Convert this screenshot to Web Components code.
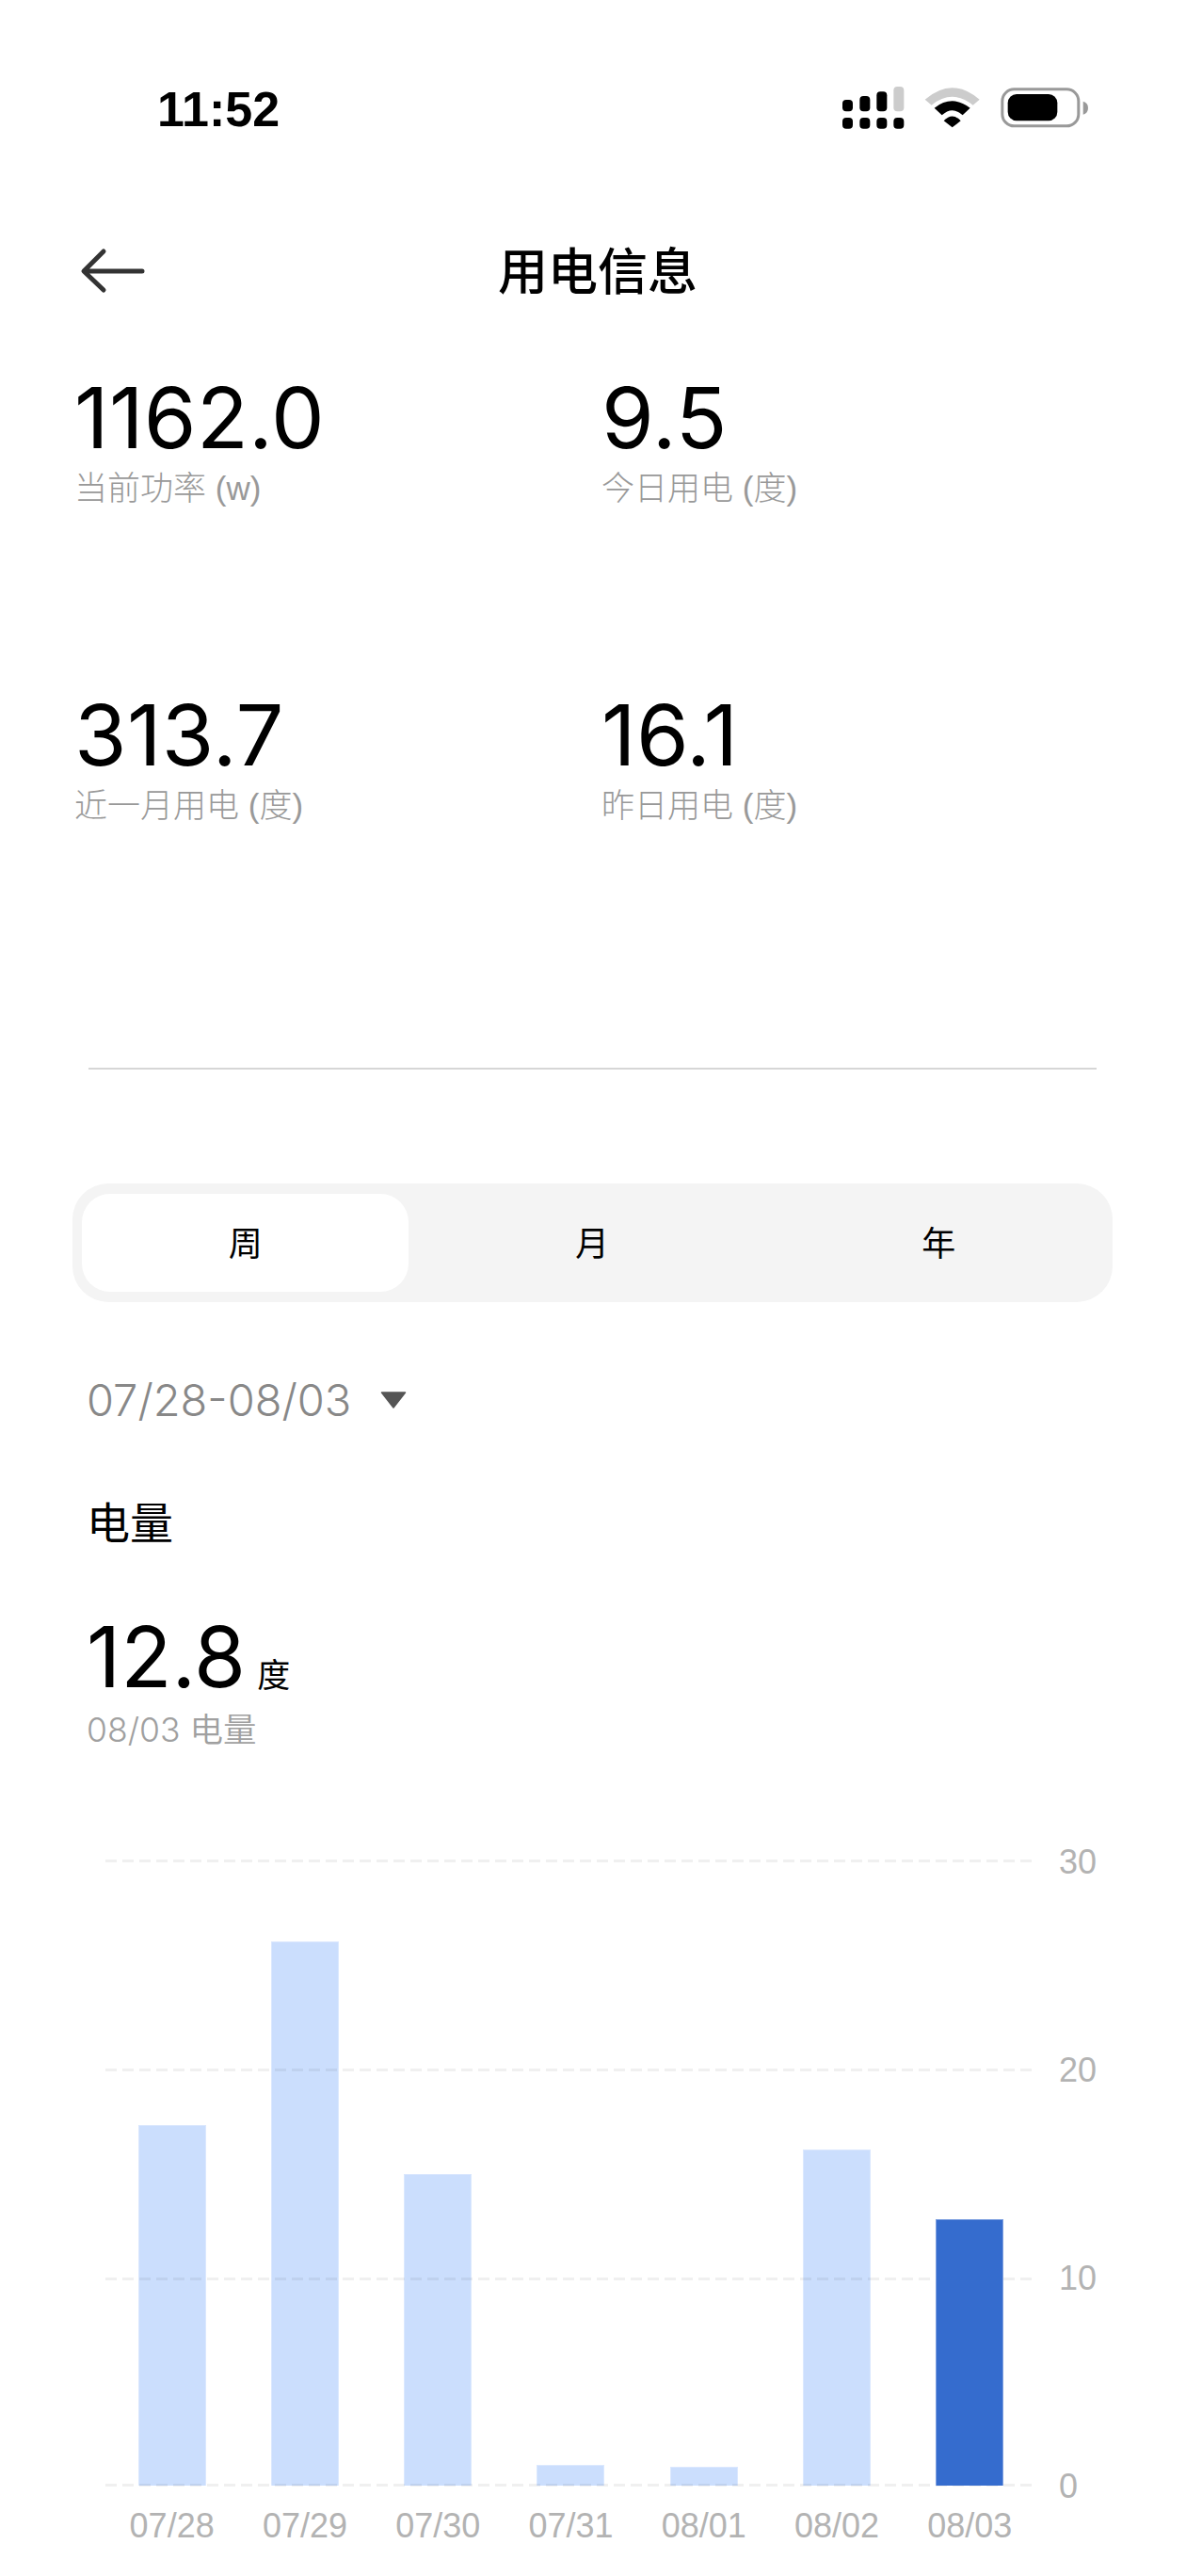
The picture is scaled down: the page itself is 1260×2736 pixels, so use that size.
<!DOCTYPE html>
<html lang="zh-CN">
<head>
<meta charset="utf-8">
<title>用电信息</title>
<style>
  html, body { margin: 0; background: #fff; }
  body { width: 1260px; height: 2736px; overflow: hidden; font-family: "Liberation Sans", "Noto Sans CJK SC", sans-serif; color: #000; }
</style>
</head>
<body>
<ui-status-bar time="11:52"></ui-status-bar>
<ui-nav-bar>用电信息</ui-nav-bar>
<ui-stats>
  <ui-stat value="1162.0" label="当前功率 (w)"></ui-stat>
  <ui-stat value="9.5" label="今日用电 (度)"></ui-stat>
  <ui-stat value="313.7" label="近一月用电 (度)"></ui-stat>
  <ui-stat value="16.1" label="昨日用电 (度)"></ui-stat>
</ui-stats>
<ui-divider></ui-divider>
<ui-segmented items="周,月,年"></ui-segmented>
<ui-range>07/28-08/03</ui-range>
<ui-summary title="电量" value="12.8" unit="度" caption="08/03 电量"></ui-summary>
<ui-bar-chart></ui-bar-chart>
<script>
function def(name, css, html) {
  customElements.define(name, class extends HTMLElement {
    constructor() { super(); this.attachShadow({mode: 'open'}); }
    connectedCallback() {
      this.shadowRoot.innerHTML = '<style>' + css + '</style>' + (typeof html === 'function' ? html(this) : html);
    }
  });
}
const a = (el, n) => el.getAttribute(n) || '';

def('ui-status-bar', `
  :host { display: flex; height: 250px; box-sizing: border-box; padding-left: 167px; justify-content: space-between; align-items: flex-start; }
  .time { font: bold 52px/60px "Liberation Sans", sans-serif; margin-top: 86px; }
  svg { display: block; margin: 70px 80px 0 0; }
`, el => `<div class="time">${a(el,'time')}</div>
  <svg width="320" height="80" viewBox="0 0 960 240">
    <g fill="#000">
      <rect x="105" y="108" width="33" height="37" rx="12"/><rect x="160" y="96" width="33" height="49" rx="12"/>
      <rect x="214" y="82" width="33" height="63" rx="12"/><rect x="268" y="66" width="33" height="79" rx="12" fill="#ccc"/>
      <rect x="105" y="165" width="33" height="35" rx="12"/><rect x="160" y="165" width="33" height="35" rx="12"/>
      <rect x="214" y="165" width="33" height="35" rx="12"/><rect x="268" y="165" width="33" height="35" rx="12"/>
    </g>
    <path d="M368 107Q455 32 542 107L521 125Q455 72 389 125Z" fill="#ccc"/>
    <path d="M398 134Q455 90 512 134L488 157Q455 126 422 157Z" fill="#000"/>
    <path d="M428 175Q455 146 482 175L455 196Z" fill="#000"/>
    <rect x="614.5" y="74.5" width="243" height="117" rx="38" fill="none" stroke="#999" stroke-width="9"/>
    <rect x="632" y="90" width="158" height="85" rx="28" fill="#000"/>
    <path d="M872 113Q888 118 888 134Q888 150 872 155Z" fill="#999"/>
  </svg>`);

def('ui-nav-bar', `
  :host { display: grid; grid-template-columns: 1fr auto 1fr; align-items: center; height: 75px; padding: 0 60px 0 70px; }
  svg { display: block; }
  .t { font: 500 53px/75px "Liberation Sans", "Noto Sans CJK SC", sans-serif; position: relative; top: 2px; }
`, `<svg width="100" height="75" viewBox="0 0 100 75"><path d="M81 38H20M40 17L19 38L40 58" fill="none" stroke="#333" stroke-width="5" stroke-linecap="round" stroke-linejoin="round"/></svg>
   <div class="t"><slot></slot></div><div></div>`);

def('ui-stats', `
  :host { display: grid; grid-template-columns: 560px 560px; grid-auto-rows: 337px; padding: 75px 0 0 79px; height: 809px; box-sizing: border-box; }
`, `<slot></slot>`);

def('ui-stat', `
  :host { display: block; }
  .v { font: 420 90px/90px Inter, "Liberation Sans", sans-serif; letter-spacing: .3px; color: #000; margin-top: -1px; }
  .l { font: 300 35px/44px "Liberation Sans", "Noto Sans CJK SC", sans-serif; color: #999; margin-top: 8px; }
`, el => `<div class="v">${a(el,'value')}</div><div class="l">${a(el,'label')}</div>`);

def('ui-divider', `
  :host { display: block; height: 2px; margin: 0 95px 0 94px; background: #d6d6d6; }
`, ``);

def('ui-segmented', `
  :host { display: grid; grid-template-columns: repeat(3, 1fr); height: 126px; width: 1105px; margin: 121px 0 0 77px; background: #f4f4f4; border-radius: 38px; }
  div { margin: 11px 11px 11px 10px; border-radius: 30px; display: flex; align-items: center; justify-content: center; padding-bottom: 5px; box-sizing: border-box; font: 36px "Noto Sans CJK SC", sans-serif; }
  .on { background: #fff; }
`, el => a(el,'items').split(',').map((t,i) => `<div class="${i===0?'on':''}">${t}</div>`).join(''));

def('ui-range', `
  :host { display: flex; align-items: center; height: 60px; margin: 74px 0 0 92px; color: #888; font: 350 47px/60px Inter, "Liberation Sans", sans-serif; }
  svg { display: block; margin-left: 31px; }
`, `<slot></slot><svg width="28" height="18" viewBox="0 0 28 18"><path d="M1.5 1H26.5L14 17Z" fill="#555" stroke="#555" stroke-width="1.5" stroke-linejoin="round"/></svg>`);

def('ui-summary', `
  :host { display: block; margin: 71px 0 0 92px; }
  .t { font: 46px/60px "Liberation Sans", "Noto Sans CJK SC", sans-serif; }
  .row { display: flex; align-items: baseline; margin-top: 67px; height: 90px; }
  .v { font: 420 89px/90px Inter, "Liberation Sans", sans-serif; }
  .u { font: 35px/40px "Noto Sans CJK SC", sans-serif; margin-left: 12px; }
  .c { font: 350 35.5px/44px Inter, "Noto Sans CJK SC", sans-serif; color: #a0a0a0; margin-top: 11px; }
`, el => `<div class="t">${a(el,'title')}</div>
  <div class="row"><span class="v">${a(el,'value')}</span><span class="u">${a(el,'unit')}</span></div>
  <div class="c">${a(el,'caption')}</div>`);

def('ui-bar-chart', `
  :host { display: grid; grid-template-columns: 989px auto; column-gap: 24px; margin: 115px 0 0 112px; width: 1148px; }
  .plot { position: relative; height: 665px; display: flex; align-items: flex-end; }
  .col { flex: 1; display: flex; justify-content: center; align-items: flex-end; }
  .bar { width: 72px; box-sizing: border-box; background: #cbdefd; border: 1px solid #dbe8fe; border-bottom: 0; }
  .bar.on { background: #356cce; border-color: #7e9fdf; position: relative; z-index: 2; }
  .grid { position: absolute; inset: 0 5px 0 0; display: flex; flex-direction: column; z-index: 1; pointer-events: none; }
  .grid i { display: block; flex: none; height: 3px; margin-bottom: 219px; background: repeating-linear-gradient(90deg, rgba(0,0,0,.06) 0 12px, transparent 12px 18px); }
  .grid i:nth-child(3) { margin-bottom: 216px; }
  .grid i:nth-child(4) { margin-bottom: 0; }
  .axis { height: 667px; margin-bottom: -2px; display: flex; flex-direction: column; justify-content: space-between; color: #b3b3b3; font: 36px/0 "Liberation Sans", sans-serif; padding-top: 2px; box-sizing: border-box; }
  .axis span { display: block; height: 2px; line-height: 2px; }
  .x { display: flex; color: #b3b3b3; font: 36px/44px "Liberation Sans", sans-serif; margin-top: 21px; }
  .x span { flex: 1; text-align: center; }
`, () => {
  const tops = [2258, 2063, 2310, 2619, 2621, 2284, 2358];
  const labels = ['07/28','07/29','07/30','07/31','08/01','08/02','08/03'];
  return `<div class="plot">
      ${tops.map((t,i) => `<div class="col"><div class="bar${i===6?' on':''}" style="height:${2641-t}px"></div></div>`).join('')}
      <div class="grid"><i></i><i></i><i></i><i></i></div>
    </div>
    <div class="axis"><span>30</span><span>20</span><span>10</span><span>0</span></div>
    <div class="x">${labels.map(l => `<span>${l}</span>`).join('')}</div>`;
});
</script>
</body>
</html>
